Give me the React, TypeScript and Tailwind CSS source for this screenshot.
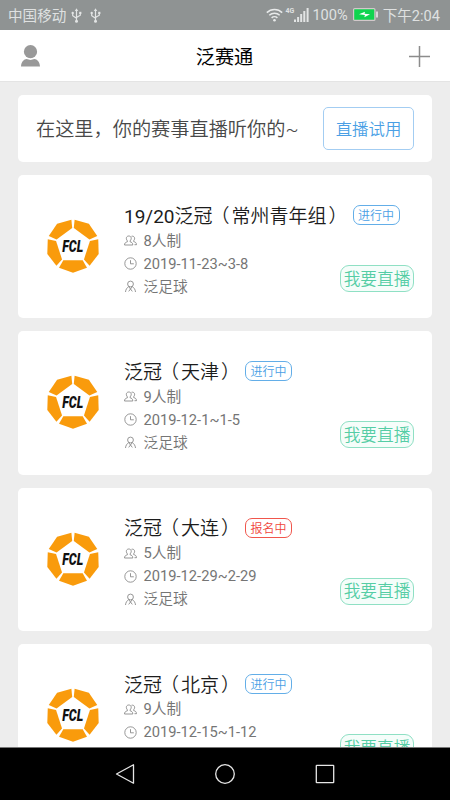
import type { ReactNode } from "react";

const matches = [
  { season: "19/20", name: "泛冠", group: "常州青年组", status: "进行中", open: false, size: "8人制", date: "2019-11-23~3-8", host: "泛足球" },
  { season: "", name: "泛冠", group: "天津", status: "进行中", open: false, size: "9人制", date: "2019-12-1~1-5", host: "泛足球" },
  { season: "", name: "泛冠", group: "大连", status: "报名中", open: true, size: "5人制", date: "2019-12-29~2-29", host: "泛足球" },
  { season: "", name: "泛冠", group: "北京", status: "进行中", open: false, size: "9人制", date: "2019-12-15~1-12", host: "泛足球" },
];

function UsbIcon() {
  return (
    <svg className="h-[15px] w-[11px]" viewBox="0 0 11 15" fill="none" stroke="#e3e5e5" strokeWidth="1.2">
      <path d="M5.5 2v11M1.7 5.5v2.2l3.8 2.6M9.3 5v2.2L5.5 9.5" />
      <path d="M5.5 .3 7.2 3H3.8z" fill="#e3e5e5" stroke="none" />
      <circle cx="5.5" cy="13.2" r="1.5" fill="#e3e5e5" stroke="none" />
      <circle cx="1.7" cy="5" r="1.2" fill="#e3e5e5" stroke="none" />
      <path d="M8.2 3.8h2.2V6H8.2z" fill="#e3e5e5" stroke="none" />
    </svg>
  );
}

function StatusBar() {
  return (
    <div className="flex h-[30px] shrink-0 items-center bg-[#8f9393] pl-2 pr-[10px] text-[14.6px] text-[#dfe1e1]">
      <span className="mr-[5px] pt-[3px]">中国移动</span>
      <UsbIcon />
      <span className="w-2" />
      <UsbIcon />
      <div className="ml-auto flex items-center">
        <svg className="h-[14px] w-[17px]" viewBox="0 0 17 14" fill="none" stroke="#e8eaea" strokeWidth="1.5">
          <path d="M.8 4.6a11 11 0 0 1 15.4 0M3.3 7.3a7.4 7.4 0 0 1 10.4 0M5.6 9.9a4.2 4.2 0 0 1 5.8 0" />
          <circle cx="8.5" cy="12.2" r="1.3" fill="#e8eaea" stroke="none" />
        </svg>
        <span className="mb-[7px] ml-[3px] text-[7px] font-bold leading-none">4G</span>
        <svg className="mr-[3px] h-[14px] w-[15px]" viewBox="0 0 15 14" fill="#e3e5e5">
          <path d="M0 11.5h2V14H0zM3.1 9h2v5h-2zM6.2 6h2v8h-2zM9.3 3h2v11h-2zM12.6 0h2v14h-2z" />
        </svg>
        <span className="pt-px">100%</span>
        <svg className="mx-[5px] h-[13px] w-[25px]" viewBox="0 0 25 13">
          <rect x=".6" y=".6" width="21.3" height="11.8" rx="1" fill="#0fd44f" stroke="#d3c8cb" strokeWidth="1.2" />
          <path d="M23 3.5h2v6h-2z" fill="#d8dada" />
          <path d="m6 6.3 6-2.6-.5 2 5.5.5-5.6 3 .5-2.2z" fill="#fff" />
        </svg>
        <span className="pt-[3px]">下午2:04</span>
      </div>
    </div>
  );
}

function Header() {
  return (
    <header className="flex h-[52px] shrink-0 items-center justify-between border-b border-[#e4e4e4] bg-white pl-[21px] pr-5">
      <svg className="h-[22px] w-[19px]" viewBox="0 0 19 22" fill="#999">
        <circle cx="9.5" cy="6.7" r="6.6" />
        <path d="M0 21.5C.3 17 3 14.2 5.6 14.1c2.6 1.1 5.2 1.1 7.8 0 2.6.1 5.3 2.9 5.6 7.4z" />
      </svg>
      <h1 className="pt-[5px] text-[19.2px] text-black">泛赛通</h1>
      <svg className="mt-px h-[21px] w-[21px]" viewBox="0 0 21 21" stroke="#8c8c8c" strokeWidth="1.5">
        <path d="M10.5 0v21M0 10.5h21" />
      </svg>
    </header>
  );
}

function ClubLogo() {
  return (
    <svg className="mt-[44px] h-[54px] w-[54px] shrink-0" viewBox="-81 -80 162 162">
      <g fill="#f99b0c">
        {[0, 72, 144, 216, 288].map((angle) => (
          <path key={angle} d="M-29 44H29L42 66 0 81-42 66z" transform={`rotate(${angle})`} />
        ))}
      </g>
      <text
        x="-1"
        y="18"
        textAnchor="middle"
        textLength="63"
        lengthAdjust="spacingAndGlyphs"
        className="text-[50px] font-black italic"
        fill="#111"
      >
        FCL
      </text>
    </svg>
  );
}

function Row({ icon, children }: { icon: ReactNode; children: ReactNode }) {
  return (
    <div className="flex h-[23px] items-center gap-[6.5px] text-[14.7px] leading-[23px] text-[#757575]">
      <svg className="h-[13px] w-[13px]" viewBox="0 0 13 13" fill="none" stroke="#8a8a8a" strokeWidth=".9">
        {icon}
      </svg>
      <span className="pt-px">{children}</span>
    </div>
  );
}

function MatchCard({ match }: { match: (typeof matches)[number] }) {
  return (
    <article className="flex h-[143.3px] shrink-0 rounded-[5px] bg-white pl-7 pr-[18px]">
      <ClubLogo />
      <div className="ml-6 flex-1 pt-[27px]">
        <div className="flex h-[26px] items-center">
          <h2 className="whitespace-nowrap pt-1 text-[19px] font-[350] text-[#1c1c1c]">
            <span className="font-normal">{match.season}</span>
            {match.name}
            <span className="-ml-[2px] mr-[2px]">（</span>
            {match.group}
            <span className="ml-[2px] -mr-[2px]">）</span>
          </h2>
          <span
            className={`ml-[7px] flex h-5 w-[47px] items-center justify-center rounded-[7px] border pt-[2px] text-[12px] font-[350] ${
              match.open ? "border-[#f0564c] text-[#f0453a]" : "border-[#63aee8] text-[#4a9fe5]"
            }`}
          >
            {match.status}
          </span>
        </div>
        <div className="flex items-start justify-between">
          <div className="pt-px">
            <Row
              icon={
                <>
                  <path d="M.5 11h8.3c0-2.2-1.2-2.8-2.7-3.2V6.9C8.2 4.5 7.2 2 4.8 2S1.4 4.5 3.4 6.9v.9C1.7 8.3.5 9 .5 11z" />
                  <path d="M7.5 2.3c2.7-.8 4.2 2 2.2 4.4v.9c1.7.4 2.8 1.2 2.8 3.1h-2" />
                </>
              }
            >
              {match.size}
            </Row>
            <Row
              icon={
                <>
                  <circle cx="6.5" cy="6.5" r="5.7" />
                  <path d="M6.5 3.2v3.6h3.3" />
                </>
              }
            >
              {match.date}
            </Row>
            <Row
              icon={
                <>
                  <circle cx="6.5" cy="4" r="2.9" />
                  <path d="M1.5 12c.2-2.6 1.5-4.3 3.2-5.4l3.6 4.8M11.5 12c-.2-2.6-1.5-4.3-3.2-5.4l-3.6 4.8" />
                </>
              }
            >
              <span className="font-[350]">{match.host}</span>
            </Row>
          </div>
          <button className="mt-[37px] h-[27px] w-[74px] rounded-[9px] border border-[#8fe0c4] bg-[#f5fdfa] pt-[3px] text-[16.7px] font-[350] leading-none text-[#55cda5]">
            我要直播
          </button>
        </div>
      </div>
    </article>
  );
}

function NavBar() {
  return (
    <nav className="flex h-[53px] shrink-0 items-center justify-center gap-20 border-t border-[#777] bg-black">
      <svg className="h-5 w-5" viewBox="0 0 20 20" fill="none" stroke="#e6e6e6" strokeWidth="1.3" strokeLinejoin="round">
        <path d="M18.5.8v18.4L1.5 10z" />
      </svg>
      <svg className="h-5 w-5" viewBox="0 0 20 20" fill="none" stroke="#e6e6e6" strokeWidth="1.3">
        <circle cx="10" cy="10" r="9.3" />
      </svg>
      <svg className="h-5 w-5" viewBox="0 0 20 20" fill="none" stroke="#e6e6e6" strokeWidth="1.3">
        <rect x="1.3" y="1.3" width="17.4" height="17.4" rx=".5" />
      </svg>
    </nav>
  );
}

export default function App() {
  return (
    <div className="flex h-[800px] w-[450px] flex-col overflow-hidden bg-[#ededed] font-[Roboto,'Noto_Sans_CJK_SC',sans-serif]">
      <StatusBar />
      <Header />
      <main className="flex min-h-0 flex-1 flex-col gap-[13px] overflow-hidden px-[18px] pt-[13px]">
        <section className="flex h-[67px] shrink-0 items-center justify-between rounded-[5px] bg-white px-[18px]">
          <p className="whitespace-nowrap pt-1 text-[19.2px] font-[350] text-[#484848]">在这里，你的赛事直播听你的~</p>
          <button className="h-[43px] w-[91px] rounded-[5px] border border-[#a3cdf2] pt-[3px] text-[16.4px] font-[350] text-[#4a9fe5]">
            直播试用
          </button>
        </section>
        {matches.map((match) => (
          <MatchCard key={`${match.name}-${match.group}`} match={match} />
        ))}
      </main>
      <NavBar />
    </div>
  );
}
